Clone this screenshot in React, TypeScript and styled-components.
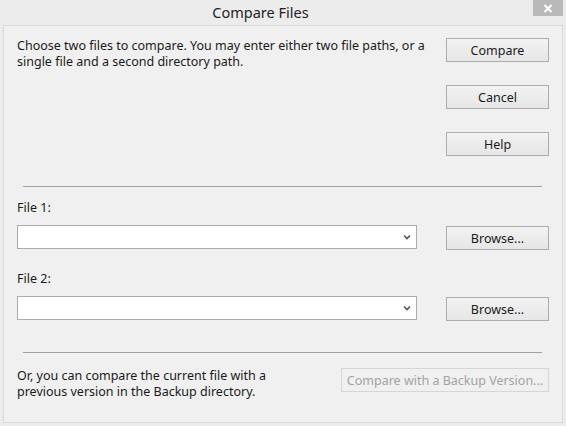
import styled, { createGlobalStyle } from "styled-components";

const GlobalStyle = createGlobalStyle`
  html, body {
    margin: 0;
    padding: 0;
    background: #ececec;
  }
  body {
    font-family: "Noto Sans", "Open Sans", sans-serif;
  }
`;

//#region Styling
const Window = styled.div`
  width: 566px;
  height: 426px;
  display: flex;
  flex-direction: column;
  background: #ececec;
  box-sizing: border-box;
`;

const TitleBar = styled.div`
  height: 25px;
  display: grid;
  grid-template-columns: 1fr auto 1fr;
  align-items: start;
`;

const Title = styled.div`
  grid-column: 2;
  margin-right: 45px;
  font-size: 14.5px;
  line-height: 25px;
  color: #1e1e1e;
`;

const CloseButton = styled.div`
  grid-column: 3;
  justify-self: end;
  margin-right: 3px;
  width: 30px;
  height: 16px;
  background: #b9b9b9;
  display: flex;
  align-items: center;
  justify-content: center;
`;

const Client = styled.div`
  flex: 1;
  margin: 0 3px 3px 3px;
  border: 1px solid #d9d9d9;
  background: #f0f0f0;
  padding: 12px 13px 0 13px;
  display: flex;
  flex-direction: column;
  font-size: 12.5px;
  line-height: 16px;
  color: #1a1a1a;
`;

const TopSection = styled.div`
  display: grid;
  grid-template-columns: 1fr 103px;
  column-gap: 10px;
`;

const ButtonColumn = styled.div`
  display: flex;
  flex-direction: column;
  gap: 23px;
`;

const Button = styled.button<{ $disabled?: boolean }>`
  height: 24px;
  width: ${(p) => (p.$disabled ? "208px" : "103px")};
  padding: 0;
  margin: 0;
  font-family: inherit;
  font-size: 12.5px;
  color: ${(p) => (p.$disabled ? "#a3a3a3" : "#1a1a1a")};
  border: 1px solid ${(p) => (p.$disabled ? "#d6d6d6" : "#adadad")};
  background: ${(p) =>
    p.$disabled ? "#f0f0f0" : "linear-gradient(#f2f2f2, #e6e6e6)"};
  box-sizing: border-box;
`;

const Separator = styled.div<{ $top: number }>`
  height: 1px;
  background: #a0a0a0;
  margin: ${(p) => p.$top}px 7px 0 6px;
`;

const Label = styled.div<{ $top: number }>`
  margin-top: ${(p) => p.$top}px;
`;

const FileRow = styled.div`
  margin-top: 9px;
  display: flex;
  align-items: flex-start;
  gap: 29px;
`;

const Combo = styled.div`
  width: 400px;
  height: 24px;
  box-sizing: border-box;
  border: 1px solid #ababab;
  background: #ffffff;
  display: flex;
  align-items: center;
  justify-content: flex-end;
  padding-right: 5px;
`;

const BrowseButton = styled(Button)`
  margin-top: 1px;
`;

const BottomRow = styled.div`
  margin-top: 15px;
  display: flex;
  justify-content: space-between;
  align-items: flex-start;
`;
//#endregion

function Chevron() {
  return (
    <svg width="8" height="6" viewBox="0 0 8 6">
      <polyline points="1,1.5 4,4.5 7,1.5" fill="none" stroke="#555" strokeWidth="1.6" />
    </svg>
  );
}

function FileField({ label, top }: { label: string; top: number }) {
  return (
    <>
      <Label $top={top}>{label}</Label>
      <FileRow>
        <Combo>
          <Chevron />
        </Combo>
        <BrowseButton>Browse...</BrowseButton>
      </FileRow>
    </>
  );
}

export default function App() {
  return (
    <>
      <GlobalStyle />
      <Window>
        <TitleBar>
          <Title>Compare Files</Title>
          <CloseButton>
            <svg width="10" height="9" viewBox="0 0 10 9">
              <path d="M1.5 1 L8.5 8 M8.5 1 L1.5 8" stroke="#fff" strokeWidth="2" />
            </svg>
          </CloseButton>
        </TitleBar>
        <Client>
          <TopSection>
            <div>
              Choose two files to compare. You may enter either two file paths, or a
              <br />
              single file and a second directory path.
            </div>
            <ButtonColumn>
              <Button>Compare</Button>
              <Button>Cancel</Button>
              <Button>Help</Button>
            </ButtonColumn>
          </TopSection>
          <Separator $top={30} />
          <FileField label="File 1:" top={13} />
          <FileField label="File 2:" top={21} />
          <Separator $top={31} />
          <BottomRow>
            <div>
              Or, you can compare the current file with a
              <br />
              previous version in the Backup directory.
            </div>
            <Button $disabled>Compare with a Backup Version...</Button>
          </BottomRow>
        </Client>
      </Window>
    </>
  );
}
